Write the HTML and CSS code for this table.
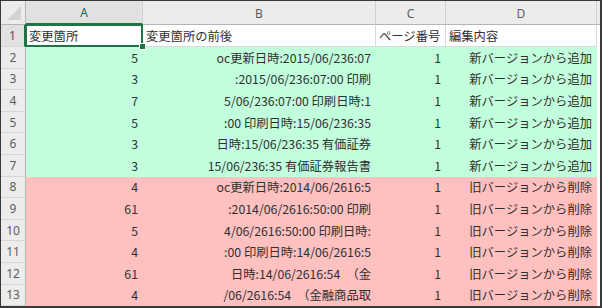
FILE: index.html
```html
<!DOCTYPE html>
<html lang="ja">
<head>
<meta charset="utf-8">
<link rel="stylesheet" href="styles.css">
</head>
<body>
<div class="sheet">
  <div class="corner"><svg width="24" height="23" viewBox="0 0 24 23"><polygon points="20,5 20,19 6,19" fill="#d3d3d3"/></svg></div>
  <div class="ch sel">A</div>
  <div class="ch">B</div>
  <div class="ch">C</div>
  <div class="ch">D</div>
  <div class="ch fill"></div>

  <div class="rh sel">1</div>
  <div class="c w l a1">変更箇所</div>
  <div class="c w l">変更箇所の前後</div>
  <div class="c w l">ページ番号</div>
  <div class="c w l">編集内容</div>
  <div class="c blank"></div>

  <div class="rh">2</div>
  <div class="c g">5</div>
  <div class="c g">oc更新日時:2015/06/236:07</div>
  <div class="c g">1</div>
  <div class="c g">新バージョンから追加</div>
  <div class="c blank"></div>

  <div class="rh">3</div>
  <div class="c g">3</div>
  <div class="c g">:2015/06/236:07:00 印刷</div>
  <div class="c g">1</div>
  <div class="c g">新バージョンから追加</div>
  <div class="c blank"></div>

  <div class="rh">4</div>
  <div class="c g">7</div>
  <div class="c g">5/06/236:07:00 印刷日時:1</div>
  <div class="c g">1</div>
  <div class="c g">新バージョンから追加</div>
  <div class="c blank"></div>

  <div class="rh">5</div>
  <div class="c g">5</div>
  <div class="c g">:00 印刷日時:15/06/236:35</div>
  <div class="c g">1</div>
  <div class="c g">新バージョンから追加</div>
  <div class="c blank"></div>

  <div class="rh">6</div>
  <div class="c g">3</div>
  <div class="c g">日時:15/06/236:35 有価証券</div>
  <div class="c g">1</div>
  <div class="c g">新バージョンから追加</div>
  <div class="c blank"></div>

  <div class="rh">7</div>
  <div class="c g">3</div>
  <div class="c g">15/06/236:35 有価証券報告書</div>
  <div class="c g">1</div>
  <div class="c g">新バージョンから追加</div>
  <div class="c blank"></div>

  <div class="rh">8</div>
  <div class="c p">4</div>
  <div class="c p">oc更新日時:2014/06/2616:5</div>
  <div class="c p">1</div>
  <div class="c p">旧バージョンから削除</div>
  <div class="c blank"></div>

  <div class="rh">9</div>
  <div class="c p">61</div>
  <div class="c p">:2014/06/2616:50:00 印刷</div>
  <div class="c p">1</div>
  <div class="c p">旧バージョンから削除</div>
  <div class="c blank"></div>

  <div class="rh">10</div>
  <div class="c p">5</div>
  <div class="c p">4/06/2616:50:00 印刷日時:</div>
  <div class="c p">1</div>
  <div class="c p">旧バージョンから削除</div>
  <div class="c blank"></div>

  <div class="rh">11</div>
  <div class="c p">4</div>
  <div class="c p">:00 印刷日時:14/06/2616:5</div>
  <div class="c p">1</div>
  <div class="c p">旧バージョンから削除</div>
  <div class="c blank"></div>

  <div class="rh">12</div>
  <div class="c p">61</div>
  <div class="c p">日時:14/06/2616:54　（金</div>
  <div class="c p">1</div>
  <div class="c p">旧バージョンから削除</div>
  <div class="c blank"></div>

  <div class="rh">13</div>
  <div class="c p">4</div>
  <div class="c p">/06/2616:54　（金融商品取</div>
  <div class="c p">1</div>
  <div class="c p">旧バージョンから削除</div>
  <div class="c blank"></div>
</div>
</body>
</html>
```

FILE: styles.css
```css
html, body {
  margin: 0;
  padding: 0;
  background: #ffffff;
}

.sheet {
  box-sizing: border-box;
  width: 602px;
  height: 308px;
  overflow: hidden;
  border-top: 1px solid #3a3a3a;
  border-left: 1px solid #3a3a3a;
  border-right: 2px solid #3a3a3a;
  border-bottom: 2px solid #3a3a3a;
  display: grid;
  grid-template-columns: 25px 117px 233px 70px 151px 1fr;
  grid-template-rows: 24px 22px repeat(12, 21.6px);
  font-family: "Noto Sans CJK JP", "Noto Sans", sans-serif;
  font-size: 12.3px;
  color: #303030;
}

.corner {
  background: #ececec;
  border-right: 1px solid #b4b4b4;
  border-bottom: 1px solid #b4b4b4;
  box-sizing: border-box;
  display: flex;
  align-items: flex-end;
  justify-content: flex-end;
}
.corner svg { display: block; }

.ch {
  background: #ececec;
  box-sizing: border-box;
  border-right: 1px solid #d0d0d0;
  border-bottom: 1px solid #b4b4b4;
  display: flex;
  align-items: center;
  justify-content: center;
  font-family: "Noto Sans", sans-serif;
  font-size: 12px;
  color: #5c5c5c;
  padding-top: 1px;
}
.ch.sel {
  background: #e1e1e1;
  color: #1f6b45;
  border-bottom: 2px solid #217346;
}
.ch.fill {
  border-right: 1px solid #e4e4e4;
}

.rh {
  background: #ececec;
  box-sizing: border-box;
  border-right: 1px solid #b4b4b4;
  border-bottom: 1px solid #d6d6d6;
  display: flex;
  align-items: center;
  justify-content: center;
  font-family: "Noto Sans", sans-serif;
  font-size: 12px;
  color: #5c5c5c;
}
.rh.sel {
  background: #e1e1e1;
  color: #1f6b45;
  border-right: 2px solid #217346;
}

.c {
  box-sizing: border-box;
  display: flex;
  align-items: center;
  justify-content: flex-end;
  padding: 1px 4px 0 4px;
  white-space: nowrap;
  overflow: hidden;
  border-right: 1px solid transparent;
  border-bottom: 1px solid transparent;
}
.c.l { justify-content: flex-start; padding-left: 3px; }
.c.w {
  background: #ffffff;
  border-right-color: #d9d9d9;
  border-bottom-color: #d9d9d9;
}
.c.g {
  background: #c2ffdc;
  border-color: #c2ffdc;
}
.c.p {
  background: #ffc0c0;
  border-color: #ffc0c0;
}
.c.blank {
  background: #ffffff;
  border-right: 1px solid #e4e4e4;
}

.a1 {
  position: relative;
  overflow: visible;
}
.a1::after {
  content: "";
  position: absolute;
  left: -1px;
  top: -1px;
  right: -1px;
  bottom: -1px;
  border: 2px solid #217346;
  pointer-events: none;
}
.a1::before {
  content: "";
  position: absolute;
  right: -4px;
  bottom: -4px;
  width: 5px;
  height: 5px;
  background: #217346;
  border: 1px solid #ffffff;
  z-index: 2;
}
```
